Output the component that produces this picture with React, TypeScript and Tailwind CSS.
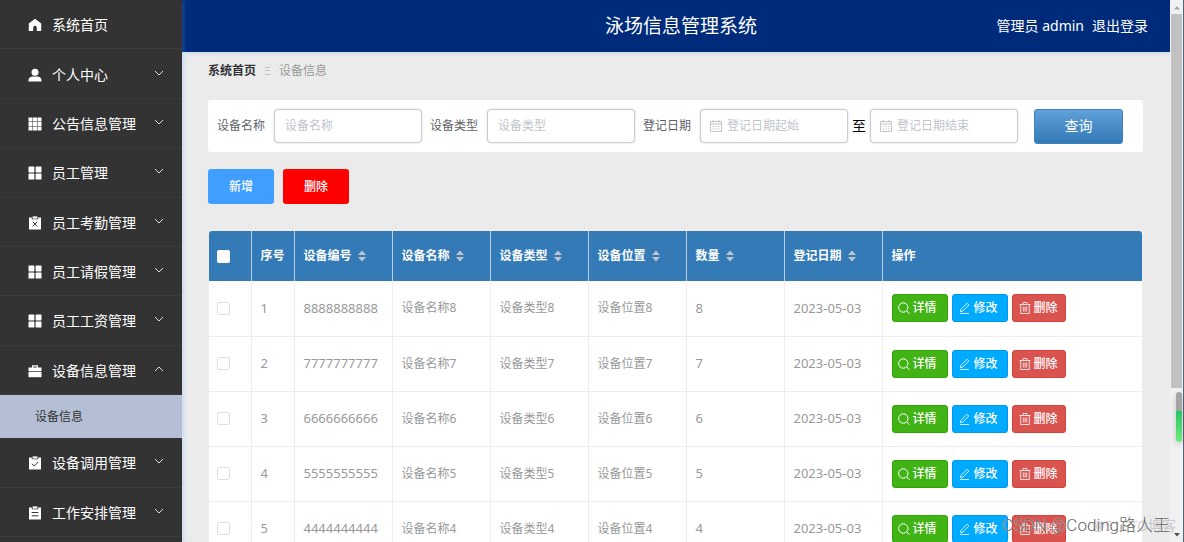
import React from "react";

type IconName = "home" | "user" | "grid9" | "grid4" | "clipX" | "case" | "clipCheck" | "clipList";

function MenuIcon({ name }: { name: IconName }) {
  return (
    <svg viewBox="0 0 14 14" className="size-[14px] shrink-0" fill="#fff" aria-hidden="true">
      {name === "home" && <path d="M7 .8 13.2 5.6V13H8.8V9.6a1.8 1.8 0 0 0-3.6 0V13H.8V5.6z" />}
      {name === "user" && (
        <>
          <circle cx="7" cy="4.2" r="3.5" />
          <path d="M.5 13.4v-1.2C.5 9.800 2.600 8.600 4.500 8.600h5c1.900 0 4 1.200 4 3.600v1.200z" />
        </>
      )}
      {name === "grid9" &&
        [0.5, 5, 9.5].map((y) => [0.5, 5, 9.5].map((x) => <rect key={`${x}-${y}`} x={x} y={y} width="4" height="4" />))}
      {name === "grid4" &&
        [0.5, 7.6].map((y) => [0.5, 7.6].map((x) => <rect key={`${x}-${y}`} x={x} y={y} width="5.9" height="5.9" rx=".6" />))}
      {name === "case" && (
        <>
          <path d="M4 3.500V1.200h6v2.300h3.500v3.700H.5V3.500zM5.200 2.400v1.100h3.600V2.400z" fillRule="evenodd" />
          <path d="M.5 8h13v5.200H.5z" />
        </>
      )}
      {(name === "clipX" || name === "clipCheck" || name === "clipList") && (
        <>
          <path d="M1 1.500h2.800v1.800h6.400V1.500H13v12H1z" />
          <path d="M4.600.4h4.800v2.200H4.600z" />
        </>
      )}
      {name === "clipX" && <path d="m4.700 5.700 4.600 4.800m0-4.800-4.600 4.800" stroke="#333" fill="none" />}
      {name === "clipCheck" && <path d="m3.800 7.800 2.400 2.300 4.200-4.300" stroke="#333" fill="none" />}
      {name === "clipList" && <path d="M3.700 6.500h6.600M3.700 9.800h6.600" stroke="#333" fill="none" />}
    </svg>
  );
}

function Chevron({ up }: { up?: boolean }) {
  return (
    <svg viewBox="0 0 10 10" className="mb-1 size-[10px]" fill="none" stroke="#ddd" aria-hidden="true">
      <path d={up ? "M1 7l4-4 4 4" : "M1 3l4 4 4-4"} />
    </svg>
  );
}

type Item = { icon: IconName; label: string; arrow?: "up" | "down" };

const upperItems: Item[] = [
  { icon: "home", label: "系统首页" },
  { icon: "user", label: "个人中心", arrow: "down" },
  { icon: "grid9", label: "公告信息管理", arrow: "down" },
  { icon: "grid4", label: "员工管理", arrow: "down" },
  { icon: "clipX", label: "员工考勤管理", arrow: "down" },
  { icon: "grid4", label: "员工请假管理", arrow: "down" },
  { icon: "grid4", label: "员工工资管理", arrow: "down" },
  { icon: "case", label: "设备信息管理", arrow: "up" },
];

const lowerItems: Item[] = [
  { icon: "clipCheck", label: "设备调用管理", arrow: "down" },
  { icon: "clipList", label: "工作安排管理", arrow: "down" },
];

function MenuItem({ item }: { item: Item }) {
  return (
    <li className="flex border-b border-[#3b3b3b]">
      <button type="button" className="flex grow items-center pt-[2px] pr-[18px] pl-7 text-left text-sm text-white">
        <MenuIcon name={item.icon} />
        <span className="ml-[10px] grow">{item.label}</span>
        {item.arrow && <Chevron up={item.arrow === "up"} />}
      </button>
    </li>
  );
}

function CalendarIcon() {
  return (
    <svg viewBox="0 0 12 12" className="size-3 shrink-0" fill="none" stroke="#c0c4cc" aria-hidden="true">
      <path d="M.5 1.500h11v10H.5zM.5 4h11M3 0v2.500M9 0v2.500" />
      <path d="M2.500 6.500h7M2.500 9h7" strokeDasharray="1.400 1.400" />
    </svg>
  );
}

function Field({ id, placeholder, date }: { id: string; placeholder: string; date?: boolean }) {
  return (
    <div
      className={`flex h-[34px] w-[148px] items-center gap-[5px] rounded border border-[#ccc] bg-white shadow-[0_0_2px_rgba(0,0,0,0.2)] ${date ? "px-[9px]" : "px-[10px]"}`}
    >
      {date && <CalendarIcon />}
      <input
        id={id}
        aria-label={placeholder}
        placeholder={placeholder}
        className="w-full min-w-0 text-xs outline-none placeholder:text-[#c0c4cc]"
      />
    </div>
  );
}

function Sort() {
  return (
    <svg viewBox="0 0 8 12" className="h-3 w-2" fill="#c0c4cc" aria-hidden="true">
      <path d="M4 .5 8 5H0zM4 11.500 8 7H0z" />
    </svg>
  );
}

const columns = ["设备编号", "设备名称", "设备类型", "设备位置", "数量", "登记日期"];
const rows = [8, 7, 6, 5, 4];

function Actions() {
  const base = "flex h-7 items-center gap-[3px] rounded-[3px] border text-xs font-medium text-white";
  return (
    <div className="flex gap-1">
      <button type="button" className={`${base} w-14 border-[#2ea606] bg-[#41b314] pl-[5px]`}>
        <svg viewBox="0 0 12 12" className="size-3" fill="none" stroke="#fff" aria-hidden="true">
          <circle cx="5.300" cy="5.500" r="4.700" />
          <path d="m8.700 9 3 2.800" />
        </svg>
        详情
      </button>
      <button type="button" className={`${base} w-14 border-[#0099f0] bg-[#00aaff] pl-[6px]`}>
        <svg viewBox="0 0 12 12" className="size-3" fill="none" stroke="#fff" strokeWidth=".8" aria-hidden="true">
          <path d="M1.500 9.800 2 7.300 8 1.200 9.800 3 4 9zM1 11.500h9" />
        </svg>
        修改
      </button>
      <button type="button" className={`${base} w-[54px] border-[#d9403c] bg-[#d9534f] pl-[6px]`}>
        <svg viewBox="0 0 12 12" className="size-3" fill="none" stroke="#fff" strokeWidth=".8" aria-hidden="true">
          <path d="M.5 2.500h11M4 2.500v-2h4v2M1.700 2.500v9h8.600v-9M4.300 4.500v5M6 4.500v5M7.700 4.500v5" />
        </svg>
        删除
      </button>
    </div>
  );
}

export default function App() {
  return (
    <div className="relative flex h-screen overflow-hidden bg-[#ebebeb] font-['Noto_Sans','Noto_Sans_CJK_SC',sans-serif]">
      <nav className="z-10 w-[182px] shrink-0 bg-[#333] shadow-[1px_0_5px_rgba(100,170,255,0.35)]">
        <ul className="grid h-[395px] auto-rows-fr">
          {upperItems.map((item) => (
            <MenuItem key={item.label} item={item} />
          ))}
        </ul>
        <a href="#equipment" className="flex h-[43px] items-center bg-[#b4bfd5] pl-[35px] text-xs text-[#333]">
          设备信息
        </a>
        <ul className="grid h-[99px] auto-rows-fr">
          {lowerItems.map((item) => (
            <MenuItem key={item.label} item={item} />
          ))}
        </ul>
      </nav>

      <div className="min-w-0 grow">
        <header className="grid h-[52px] grid-cols-[1fr_auto_1fr] items-center bg-[#002b7a] pr-[22px] pl-8 text-white shadow-[0_1px_4px_rgba(100,170,255,0.3)]">
          <h1 className="col-start-2 text-[19px]">泳场信息管理系统</h1>
          <div className="flex justify-end gap-2 text-sm">
            <span>管理员 admin</span>
            <a href="#logout">退出登录</a>
          </div>
        </header>

        <main className="pr-[27px] pl-[26px]">
          <div className="flex h-[39px] items-center gap-2 border-b border-[#eee] text-xs">
            <a href="#home" className="font-bold text-[#303133]">
              系统首页
            </a>
            <span className="w-[7px] text-[11px] text-[#c0c4cc]">Ξ</span>
            <span className="text-[#999]">设备信息</span>
          </div>

          <form className="mt-[9px] flex h-[52px] items-center rounded-[3px] bg-white px-[9px] text-xs text-[#606266]">
            <label htmlFor="name" className="mr-2 w-[49px]">
              设备名称
            </label>
            <Field id="name" placeholder="设备名称" />
            <label htmlFor="type" className="mx-2 w-[49px]">
              设备类型
            </label>
            <Field id="type" placeholder="设备类型" />
            <label htmlFor="from" className="mx-2 w-[49px]">
              登记日期
            </label>
            <Field id="from" placeholder="登记日期起始" date />
            <label htmlFor="to" className="mx-1 text-sm text-black">
              至
            </label>
            <Field id="to" placeholder="登记日期结束" date />
            <button
              type="button"
              className="ml-4 h-[35px] w-[89px] rounded-[3px] border border-[#3f83be] bg-linear-to-b from-[#5fa0d8] to-[#337ab7] text-sm text-white"
            >
              查询
            </button>
          </form>

          <div className="mt-[17px] flex gap-[9px] text-xs font-medium text-white">
            <button type="button" className="h-[35px] w-[66px] rounded-[3px] bg-[#409eff]">
              新增
            </button>
            <button type="button" className="h-[35px] w-[66px] rounded-[3px] bg-[#ff0000]">
              删除
            </button>
          </div>

          <div className="mt-[26px] overflow-hidden rounded-t border border-[#eee] bg-white">
            <table className="w-full table-fixed text-left text-xs text-[#999]">
              <colgroup>
                <col className="w-[42px]" />
                <col className="w-[43px]" />
                {columns.map((c) => (
                  <col key={c} className="w-[98px]" />
                ))}
                <col />
              </colgroup>
              <thead className="bg-[#337ab7] text-white">
                <tr className="h-[50px]">
                  <th className="border-r border-[#b5cee5] pl-2">
                    <input type="checkbox" aria-label="全选" className="block size-[13px] appearance-none rounded-xs bg-white" />
                  </th>
                  <th className="border-r border-[#b5cee5] pl-[9px]">序号</th>
                  {columns.map((c) => (
                    <th key={c} className="border-r border-[#b5cee5] pl-[9px]">
                      <span className="flex items-center gap-[6px]">
                        {c}
                        <Sort />
                      </span>
                    </th>
                  ))}
                  <th className="pl-[9px]">操作</th>
                </tr>
              </thead>
              <tbody>
                {rows.map((n, i) => (
                  <tr key={n} className="h-[55px] border-b border-[#eee]">
                    <td className="border-r border-[#eee] pl-2">
                      <input
                        type="checkbox"
                        aria-label={`选择第${i + 1}行`}
                        className="block size-[13px] appearance-none rounded-xs border border-[#dcdfe6] bg-white"
                      />
                    </td>
                    <td className="border-r border-[#eee] pl-[9px] text-[13px]">{i + 1}</td>
                    <td className="border-r border-[#eee] pl-[9px] text-[13px]">{String(n).repeat(10)}</td>
                    <td className="border-r border-[#eee] pl-[9px]">设备名称{n}</td>
                    <td className="border-r border-[#eee] pl-[9px]">设备类型{n}</td>
                    <td className="border-r border-[#eee] pl-[9px]">设备位置{n}</td>
                    <td className="border-r border-[#eee] pl-[9px] text-[13px]">{n}</td>
                    <td className="border-r border-[#eee] pl-[9px] text-[13px]">2023-05-03</td>
                    <td className="pl-[9px]">
                      <Actions />
                    </td>
                  </tr>
                ))}
              </tbody>
            </table>
          </div>
        </main>
      </div>

      <div className="flex w-[14px] shrink-0 flex-col items-center border-r border-[#50657d] bg-[#f1f1f1]">
        <svg viewBox="0 0 12 14" className="h-[14px] w-3 shrink-0" fill="#a3a3a3" aria-hidden="true">
          <path d="M6 6l3 3.500H3z" />
        </svg>
        <div className="h-[374px] w-[11px] shrink-0 bg-[#c1c1c1]" />
        <div className="mt-1 ml-[5px] h-[50px] w-[6px] shrink-0 rounded-full bg-linear-to-b from-[#a5a5a5] from-38% via-[#20c766] via-38% to-[#6eea7c] shadow-[0_2px_6px_rgba(0,0,0,0.2)]" />
        <svg viewBox="0 0 12 14" className="mt-auto h-[14px] w-3 shrink-0" fill="#505050" aria-hidden="true">
          <path d="M3 5h6L6 8.500z" />
        </svg>
      </div>

      <span className="absolute right-[8px] bottom-[6px] z-20 text-sm whitespace-nowrap text-[#b8b8b8]/70">@51CTO博客</span>
      <span className="absolute right-[14px] bottom-[5px] z-20 font-['Roboto','Noto_Sans_CJK_SC',sans-serif] text-[17px] leading-6 font-light whitespace-nowrap text-[#666] [text-shadow:0_0_1px_#fff]">
        CSDN @Coding路人王
      </span>
    </div>
  );
}
